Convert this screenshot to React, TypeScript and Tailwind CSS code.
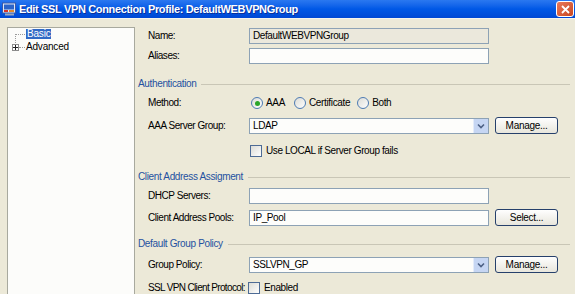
import React from "react";

const font = { fontFamily: '"Liberation Sans", Arial, sans-serif' };

const Label = ({ children, tight = false }: { children: React.ReactNode; tight?: boolean }) => (
  <div
    className={`w-[111px] shrink-0 pl-[10px] text-[10px] whitespace-nowrap text-black leading-none ${
      tight ? "tracking-[-0.65px]" : "tracking-[-0.45px]"
    }`}
  >
    {children}
  </div>
);

const TextBox = ({ value = "", readOnly = false }: { value?: string; readOnly?: boolean }) => (
  <div
    className={`w-[240px] h-[16px] border border-[#8da2b5] flex items-center pl-[3px] text-[10px] tracking-[-0.4px] leading-none text-black ${
      readOnly ? "bg-[#ebe8dc]" : "bg-[#fdfdfb]"
    }`}
  >
    {value}
  </div>
);

const Combo = ({ value }: { value: string }) => (
  <div className="w-[240px] h-[16px] border border-[#8da2b5] bg-[#fdfdfb] flex items-center text-[10px] tracking-[-0.4px] leading-none text-black">
    <span className="flex-1 pl-[3px]">{value}</span>
    <div className="w-[15px] h-[14px] bg-[#c6d6f3] border-l border-[#e4ecfa] flex items-center justify-center">
      <svg width="8" height="6" viewBox="0 0 8 6">
        <path d="M1 1.5 L4 4.5 L7 1.5" stroke="#4d6185" strokeWidth="1.6" fill="none" />
      </svg>
    </div>
  </div>
);

const XpButton = ({ children }: { children: React.ReactNode }) => (
  <button className="ml-[6px] w-[63px] h-[17px] rounded-[3px] border border-[#26406b] bg-gradient-to-b from-[#fefefe] to-[#e8e6dc] text-[10px] tracking-[-0.3px] leading-none text-black flex items-center justify-center">
    {children}
  </button>
);

const Radio = ({ checked }: { checked?: boolean }) => (
  <div className="w-[12px] h-[12px] rounded-full border border-[#4d7bb3] bg-gradient-to-br from-[#dcdcd6] to-[#fefefe] flex items-center justify-center">
    {checked && <div className="w-[5px] h-[5px] rounded-full bg-[#2aa52a]" />}
  </div>
);

const Check = () => (
  <div className="w-[12px] h-[12px] border border-[#4d6b95] bg-gradient-to-br from-[#dcdcd6] to-[#fefefe]" />
);

const Section = ({ title }: { title: string }) => (
  <div className="h-[14px] flex items-center text-[10px] tracking-[-0.35px] leading-none">
    <span className="text-[#2451a0] pr-[5px] whitespace-nowrap">{title}</span>
    <div className="flex-1 h-px bg-[#c9c6b6] mr-[5px]" />
  </div>
);

export default function App() {
  return (
    <div className="w-[575px] h-[294px] overflow-hidden bg-[#ece9d8] flex flex-col" style={font}>
      {/* title bar */}
      <div className="h-[18px] shrink-0 bg-gradient-to-b from-[#2a78f0] via-[#0058e6] to-[#0048d4] flex items-center">
        <svg width="15" height="14" viewBox="0 0 15 14" className="ml-[2px]">
          <rect x="0.5" y="1" width="13" height="10" fill="#dfe7f5" stroke="#3b5aa8" />
          <rect x="2" y="2.5" width="10" height="5" fill="#2d64c8" />
          <rect x="2" y="8" width="4" height="2" fill="#d8342a" />
          <rect x="7" y="8" width="5" height="2" fill="#e08a2c" />
          <rect x="3" y="11.5" width="9" height="2" fill="#9aa6bd" />
        </svg>
        <span className="ml-[2px] text-white font-bold text-[11px] leading-none tracking-[-0.35px]" style={{ textShadow: "1px 1px 0 #0a2f9a" }}>
          Edit SSL VPN Connection Profile: DefaultWEBVPNGroup
        </span>
        <div className="ml-auto mr-[1px] w-[18px] h-[16px] rounded-[3px] border border-white bg-gradient-to-br from-[#e8795a] to-[#c9461d] flex items-center justify-center">
          <svg width="9" height="9" viewBox="0 0 9 9">
            <path d="M1 1 L8 8 M8 1 L1 8" stroke="#fff" strokeWidth="1.8" />
          </svg>
        </div>
      </div>
      <div className="h-[1px] bg-[#f6f4ec]" />

      <div className="flex flex-1 min-h-0">
        {/* tree */}
        <div className="ml-[7px] mt-[8px] w-[128px] border border-[#a8a99e] border-b-0 bg-[#fcfcfa] relative text-[10px] tracking-[-0.2px] leading-none text-black">
          <div className="absolute left-[7px] top-[6px] w-px h-[13px] border-l border-dotted border-[#9c9c9c]" />
          <div className="flex items-center h-[10px] mt-[1px]">
            <div className="ml-[7px] w-[10px] border-t border-dotted border-[#9c9c9c]" />
            <span className="ml-[1px] bg-[#316ac5] text-white px-px h-[10px] flex items-center">Basic</span>
          </div>
          <div className="flex items-center h-[10px] mt-[3px] relative">
            <div className="ml-[4px] w-[7px] h-[7px] border border-[#8c8c8c] bg-white flex items-center justify-center">
              <svg width="5" height="5" viewBox="0 0 5 5"><path d="M0 2.5 H5 M2.5 0 V5" stroke="#222" strokeWidth="1" /></svg>
            </div>
            <div className="w-[6px] border-t border-dotted border-[#9c9c9c]" />
            <span className="ml-[1px]">Advanced</span>
          </div>
        </div>

        {/* form */}
        <div className="ml-[3px] flex-1 pt-[9px]">
          <div className="flex items-center h-[16px]">
            <Label>Name:</Label>
            <TextBox value="DefaultWEBVPNGroup" readOnly />
          </div>
          <div className="flex items-center h-[16px] mt-[4px]">
            <Label>Aliases:</Label>
            <TextBox />
          </div>

          <div className="mt-[13px]">
            <Section title="Authentication" />
          </div>
          <div className="flex items-center h-[14px] mt-[5px] text-[10px] tracking-[-0.35px] leading-none">
            <Label>Method:</Label>
            <div className="flex items-center ml-[2px]">
              <Radio checked />
              <span className="ml-[3px]">AAA</span>
              <div className="ml-[9px]"><Radio /></div>
              <span className="ml-[3px]">Certificate</span>
              <div className="ml-[7px]"><Radio /></div>
              <span className="ml-[3px]">Both</span>
            </div>
          </div>
          <div className="flex items-center h-[17px] mt-[7px]">
            <Label>AAA Server Group:</Label>
            <Combo value="LDAP" />
            <XpButton>Manage...</XpButton>
          </div>
          <div className="flex items-center h-[13px] mt-[10px] text-[10px] tracking-[-0.4px] leading-none">
            <div className="w-[111px]" />
            <div className="ml-[1px]"><Check /></div>
            <span className="ml-[4px]">Use LOCAL if Server Group fails</span>
          </div>

          <div className="mt-[13px]">
            <Section title="Client Address Assigment" />
          </div>
          <div className="flex items-center h-[16px] mt-[4px]">
            <Label>DHCP Servers:</Label>
            <TextBox />
          </div>
          <div className="flex items-center h-[17px] mt-[5px]">
            <Label>Client Address Pools:</Label>
            <TextBox value="IP_Pool" />
            <XpButton>Select...</XpButton>
          </div>

          <div className="mt-[11px]">
            <Section title="Default Group Policy" />
          </div>
          <div className="flex items-center h-[17px] mt-[5px]">
            <Label>Group Policy:</Label>
            <Combo value="SSLVPN_GP" />
            <XpButton>Manage...</XpButton>
          </div>
          <div className="flex items-center h-[13px] mt-[8px] text-[10px] tracking-[-0.4px] leading-none">
            <Label tight>SSL VPN Client Protocol:</Label>
            <div className="ml-[-1px]"><Check /></div>
            <span className="ml-[4px]">Enabled</span>
          </div>
        </div>
      </div>
    </div>
  );
}
